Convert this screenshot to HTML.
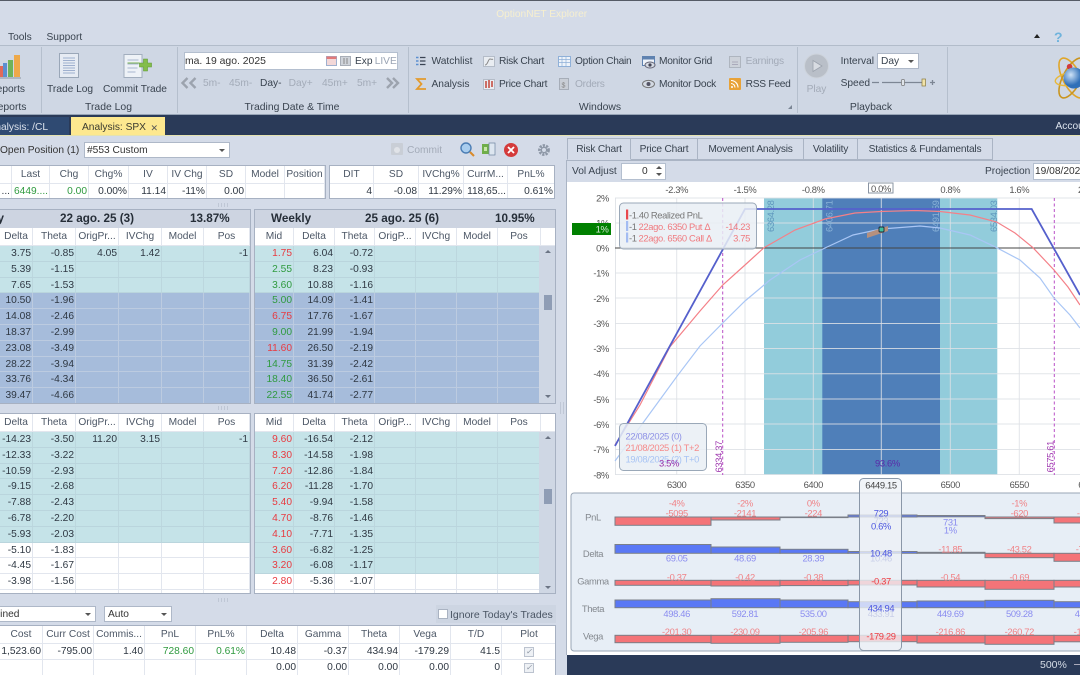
<!DOCTYPE html>
<html><head><meta charset="utf-8"><title>OptionNET Explorer</title>
<style>
html,body{margin:0;padding:0;width:1080px;height:675px;overflow:hidden;background:#d4dbe8}
#a{position:relative;width:1080px;height:675px;overflow:hidden;background:#d4dbe8;font:10.2px "Liberation Sans",sans-serif;color:#39434f;filter:blur(.3px)}
.b{position:absolute}
.t{position:absolute;white-space:nowrap;line-height:12px}
.c{transform:translateX(-50%)}
.w{letter-spacing:-.25px}
.gp{font-size:10.4px}
.dis{color:#a3abb8}
.combo{position:absolute;background:#fff;border:1px solid #aeb8c8;box-sizing:border-box;line-height:15px;padding-left:3px;white-space:nowrap;overflow:hidden}
.combo:after{content:"";position:absolute;right:4px;top:6px;border:3px solid transparent;border-top:3px solid #555;border-bottom:0}
.grid{position:absolute;background:#fff;border:1px solid #a7b1c2;border-left:0;box-sizing:border-box;overflow:hidden}
.title{height:18px;background:#cdd4e1;font-weight:bold;font-size:11.7px;position:relative;color:#262e38}
.r{display:flex;height:15.8px;line-height:15px;box-sizing:border-box;border-bottom:1px solid #e2e6ee;font-size:10.2px;color:#2e3742}
.r span{display:block;box-sizing:border-box;border-right:1px solid #e2e6ee;text-align:right;padding-right:1px;overflow:hidden;white-space:nowrap;flex:none}
.h{height:18px;line-height:17px;color:#4c5766;background:#fff;border-bottom:1px solid #e2e6ee}
.h span{text-align:center;padding:0}
.T{background:#c5e3e8;border-bottom-color:#bad5dd}.T span{border-right-color:#bcd7de}
.S{background:#a6bcdb;border-bottom-color:#bccbe0}.S span{border-right-color:#bccbe0}
.a{color:#e83a40}.g{color:#2f9a3f}
.gl .r span:nth-child(1){width:33px}.gl .r span:nth-child(2),.gl .r span:nth-child(3),.gl .r span:nth-child(4){width:43px}.gl .r span:nth-child(5){width:42px}.gl .r span:nth-child(6){width:46px}
.gr .r{width:286px}
.gr .r span:nth-child(1){width:39px}.gr .r span:nth-child(2){width:41px}.gr .r span:nth-child(3){width:40px}.gr .r span:nth-child(4),.gr .r span:nth-child(5),.gr .r span:nth-child(6){width:41px}.gr .r span:nth-child(7){width:43px}
.gr .r.h{width:302px}.gr .r.h span:nth-child(8){width:16px;border:0}
.sc{position:absolute;right:0;width:16px;background:#cfd7e4}
.dots{position:absolute;width:13px;height:4px;background-image:radial-gradient(#aab3c2 .7px,transparent .8px);background-size:3px 2px}
.top1 span:nth-child(1){width:12px}.top1 span:nth-child(2){width:38px}.top1 span:nth-child(3){width:39px}.top1 span:nth-child(4){width:40px}.top1 span:nth-child(5){width:39px}.top1 span:nth-child(6){width:39px}.top1 span:nth-child(7){width:39px}.top1 span:nth-child(8){width:39px}.top1 span:nth-child(9){width:40px}
.top2 span:nth-child(1){width:44px}.top2 span:nth-child(2){width:45px}.top2 span:nth-child(3){width:45px}.top2 span:nth-child(4){width:44px}.top2 span:nth-child(5){width:46px}
.bt span{width:51px}.bt span:nth-child(1){width:43px}.bt span:nth-child(11){width:54px;text-align:center;padding:0;border-right:0}
.tab{position:absolute;top:138px;height:22px;box-sizing:border-box;border:1px solid #aab4c4;border-left:0;border-bottom:1px solid #aab4c4;line-height:22px;text-align:center;background:#d4dbe8;font-size:10.2px;letter-spacing:-.2px;white-space:nowrap}
svg text{font-family:"Liberation Sans",sans-serif;font-size:9.4px;letter-spacing:-.35px}
.cb{display:inline-block;width:8px;height:8px;border:1px solid #bcc3cf;background:#eef1f5;color:#8a93a0;font-size:8px;line-height:8px;text-align:center;margin-top:2px}
</style></head><body><div id="a">

<!-- title -->
<div class="b" style="left:0;top:0;width:1080px;height:1px;background:#555b66"></div>
<div class="t c" style="left:541.7px;top:8.5px;color:#f6efcf">OptionNET Explorer</div>
<div class="t" style="left:8px;top:32px">Tools</div>
<div class="t" style="left:46.5px;top:32px">Support</div>
<div class="b" style="left:1033.5px;top:34px;border:3.5px solid transparent;border-bottom:4px solid #222;border-top:0"></div>
<div class="t" style="left:1054px;top:30px;color:#6fb3dc;font-weight:bold;font-size:14px;line-height:14px">?</div>

<!-- ribbon -->
<div class="b" style="left:0;top:45px;width:1080px;height:70px;background:#cfd7e4;border-top:1px solid #b2bcca;border-bottom:1px solid #97a4b6;box-sizing:border-box"></div>
<div class="b" style="left:40.5px;top:47px;width:1px;height:66px;background:#b5bfcd"></div>
<div class="b" style="left:176.5px;top:47px;width:1px;height:66px;background:#b5bfcd"></div>
<div class="b" style="left:408px;top:47px;width:1px;height:66px;background:#b5bfcd"></div>
<div class="b" style="left:796.5px;top:47px;width:1px;height:66px;background:#b5bfcd"></div>
<div class="b" style="left:947px;top:47px;width:1px;height:66px;background:#b5bfcd"></div>

<div class="t" style="right:1055px;top:84px">Reports</div>
<div class="t gp" style="right:1053.5px;top:102px">Reports</div>
<div class="t" style="left:47px;top:84px">Trade Log</div>
<div class="t" style="left:103px;top:84px">Commit Trade</div>
<div class="t c gp" style="left:108.5px;top:102px">Trade Log</div>

<div class="b" style="left:183.5px;top:52px;width:214.5px;height:18px;background:#fff;border:1px solid #b4bfcf;box-sizing:border-box"></div>
<div class="t" style="left:185px;top:56px;font-size:10.4px;color:#333">ma. 19 ago. 2025</div>
<div class="t" style="left:355px;top:56px">Exp</div>
<div class="t dis" style="left:374.7px;top:56px;color:#9aa4b4">LIVE</div>
<div class="t dis" style="left:203px;top:78px">5m-</div>
<div class="t dis" style="left:229px;top:78px">45m-</div>
<div class="t" style="left:260px;top:78px">Day-</div>
<div class="t dis" style="left:288.6px;top:78px">Day+</div>
<div class="t dis" style="left:322px;top:78px">45m+</div>
<div class="t dis" style="left:357px;top:78px">5m+</div>
<div class="t c gp" style="left:292px;top:102px">Trading Date &amp; Time</div>

<div class="t" style="left:431.5px;top:56px">Watchlist</div>
<div class="t" style="left:431.5px;top:78.5px">Analysis</div>
<div class="t w" style="left:499px;top:56px">Risk Chart</div>
<div class="t w" style="left:499px;top:78.5px">Price Chart</div>
<div class="t w" style="left:575px;top:56px">Option Chain</div>
<div class="t dis w" style="left:575px;top:78.5px">Orders</div>
<div class="t w" style="left:659px;top:56px">Monitor Grid</div>
<div class="t w" style="left:659px;top:78.5px">Monitor Dock</div>
<div class="t dis w" style="left:745.6px;top:56px">Earnings</div>
<div class="t w" style="left:745.6px;top:78.5px">RSS Feed</div>
<div class="t c gp" style="left:600px;top:102px">Windows</div>

<div class="t dis c" style="left:816.5px;top:84px">Play</div>
<div class="t" style="left:840.6px;top:56px">Interval</div>
<div class="combo" style="left:877px;top:53px;width:42px;height:16px;line-height:15px">Day</div>
<div class="t" style="left:840.6px;top:78px">Speed</div>
<div class="t c gp" style="left:871px;top:102px">Playback</div>

<!-- tab bar -->
<div class="b" style="left:0;top:115px;width:1080px;height:20px;background:#2a3a58"></div>
<div class="b" style="left:0;top:117px;width:69px;height:18px;background:#2f4a72"></div>
<div class="t" style="right:1032px;top:121.5px;color:#dbe2ec;width:64px;text-align:right;overflow:hidden">Analysis: /CL</div>
<div class="b" style="left:71px;top:117px;width:94px;height:18px;background:#fde88f"></div>
<div class="t" style="left:82px;top:121.5px;color:#3a3a30">Analysis: SPX</div>
<div class="t" style="left:150.5px;top:121.5px;color:#555;font-size:9px">✕</div>
<div class="t" style="left:1055.5px;top:120.5px;color:#dbe2ec">Account</div>
<div class="b" style="left:0;top:135px;width:1080px;height:1px;background:#e4e2b0"></div>

<!-- left toolbar -->
<div class="t" style="left:0;top:145px;color:#333">Open Position (1)</div>
<div class="combo" style="left:84px;top:142px;width:146px;height:16px;padding-left:2px;color:#333">#553 Custom</div>
<div class="t dis" style="left:407px;top:145px">Commit</div>

<!-- top tables -->
<div class="grid" style="left:0;top:165px;width:326px;height:34px">
<div class="r h top1"><span></span><span>Last</span><span>Chg</span><span>Chg%</span><span>IV</span><span>IV Chg</span><span>SD</span><span>Model</span><span>Position</span></div>
<div class="r top1" style="border:0"><span>...</span><span class="g" style="text-align:left;padding-left:2px">6449....</span><span class="g">0.00</span><span>0.00%</span><span>11.14</span><span>-11%</span><span>0.00</span><span></span><span></span></div>
</div>
<div class="grid" style="left:329px;top:165px;width:226px;height:34px;border-left:1px solid #a7b1c2">
<div class="r h top2"><span>DIT</span><span>SD</span><span>IVChg%</span><span>CurrM...</span><span style="border:0">PnL%</span></div>
<div class="r top2" style="border:0"><span>4</span><span>-0.08</span><span>11.29%</span><span>118,65...</span><span style="border:0">0.61%</span></div>
</div>
<div class="dots" style="left:217px;top:203px"></div>

<!-- grid TL -->
<div class="grid gl" style="left:0;top:209px;width:251px;height:195px">
<div class="title"><div class="t" style="right:246px;top:3px">Weekly</div><div class="t" style="left:60px;top:3px">22 ago. 25 (3)</div><div class="t" style="left:190px;top:3px">13.87%</div></div>
<div class="r h"><span>Delta</span><span>Theta</span><span>OrigPr...</span><span>IVChg</span><span>Model</span><span>Pos</span></div>
<div class="r T"><span>3.75</span><span>-0.85</span><span>4.05</span><span>1.42</span><span></span><span>-1</span></div>
<div class="r T"><span>5.39</span><span>-1.15</span><span></span><span></span><span></span><span></span></div>
<div class="r T"><span>7.65</span><span>-1.53</span><span></span><span></span><span></span><span></span></div>
<div class="r S"><span>10.50</span><span>-1.96</span><span></span><span></span><span></span><span></span></div>
<div class="r S"><span>14.08</span><span>-2.46</span><span></span><span></span><span></span><span></span></div>
<div class="r S"><span>18.37</span><span>-2.99</span><span></span><span></span><span></span><span></span></div>
<div class="r S"><span>23.08</span><span>-3.49</span><span></span><span></span><span></span><span></span></div>
<div class="r S"><span>28.22</span><span>-3.94</span><span></span><span></span><span></span><span></span></div>
<div class="r S"><span>33.76</span><span>-4.34</span><span></span><span></span><span></span><span></span></div>
<div class="r S"><span>39.47</span><span>-4.66</span><span></span><span></span><span></span><span></span></div>
</div>

<!-- grid TR -->
<div class="grid gr" style="left:254px;top:209px;width:302px;height:195px;border-left:1px solid #a7b1c2">
<div class="title"><div class="t" style="left:16px;top:3px">Weekly</div><div class="t" style="left:110px;top:3px">25 ago. 25 (6)</div><div class="t" style="left:240px;top:3px">10.95%</div></div>
<div class="r h"><span>Mid</span><span>Delta</span><span>Theta</span><span>OrigP...</span><span>IVChg</span><span>Model</span><span>Pos</span><span></span></div>
<div class="r T"><span class="a">1.75</span><span>6.04</span><span>-0.72</span><span></span><span></span><span></span><span></span></div>
<div class="r T"><span class="g">2.55</span><span>8.23</span><span>-0.93</span><span></span><span></span><span></span><span></span></div>
<div class="r T"><span class="g">3.60</span><span>10.88</span><span>-1.16</span><span></span><span></span><span></span><span></span></div>
<div class="r S"><span class="g">5.00</span><span>14.09</span><span>-1.41</span><span></span><span></span><span></span><span></span></div>
<div class="r S"><span class="a">6.75</span><span>17.76</span><span>-1.67</span><span></span><span></span><span></span><span></span></div>
<div class="r S"><span class="g">9.00</span><span>21.99</span><span>-1.94</span><span></span><span></span><span></span><span></span></div>
<div class="r S"><span class="a">11.60</span><span>26.50</span><span>-2.19</span><span></span><span></span><span></span><span></span></div>
<div class="r S"><span class="g">14.75</span><span>31.39</span><span>-2.42</span><span></span><span></span><span></span><span></span></div>
<div class="r S"><span class="g">18.40</span><span>36.50</span><span>-2.61</span><span></span><span></span><span></span><span></span></div>
<div class="r S"><span class="g">22.55</span><span>41.74</span><span>-2.77</span><span></span><span></span><span></span><span></span></div>
<div class="sc" style="top:36px;bottom:0"></div>
<div class="b" style="left:289px;top:85px;width:8px;height:15px;background:#8f9db5"></div>
<div class="b" style="left:290px;top:40px;border:3px solid transparent;border-bottom:3px solid #6b7484;border-top:0"></div>
<div class="b" style="left:290px;top:185px;border:3px solid transparent;border-top:3px solid #6b7484;border-bottom:0"></div>
</div>
<div class="dots" style="left:217px;top:406px"></div>

<!-- grid BL -->
<div class="grid gl" style="left:0;top:413px;width:251px;height:181px">
<div class="r h"><span>Delta</span><span>Theta</span><span>OrigPr...</span><span>IVChg</span><span>Model</span><span>Pos</span></div>
<div class="r T"><span>-14.23</span><span>-3.50</span><span>11.20</span><span>3.15</span><span></span><span>-1</span></div>
<div class="r T"><span>-12.33</span><span>-3.22</span><span></span><span></span><span></span><span></span></div>
<div class="r T"><span>-10.59</span><span>-2.93</span><span></span><span></span><span></span><span></span></div>
<div class="r T"><span>-9.15</span><span>-2.68</span><span></span><span></span><span></span><span></span></div>
<div class="r T"><span>-7.88</span><span>-2.43</span><span></span><span></span><span></span><span></span></div>
<div class="r T"><span>-6.78</span><span>-2.20</span><span></span><span></span><span></span><span></span></div>
<div class="r T"><span>-5.93</span><span>-2.03</span><span></span><span></span><span></span><span></span></div>
<div class="r"><span>-5.10</span><span>-1.83</span><span></span><span></span><span></span><span></span></div>
<div class="r"><span>-4.45</span><span>-1.67</span><span></span><span></span><span></span><span></span></div>
<div class="r"><span>-3.98</span><span>-1.56</span><span></span><span></span><span></span><span></span></div>
<div class="r"><span></span><span></span><span></span><span></span><span></span><span></span></div>
</div>

<!-- grid BR -->
<div class="grid gr" style="left:254px;top:413px;width:302px;height:181px;border-left:1px solid #a7b1c2">
<div class="r h"><span>Mid</span><span>Delta</span><span>Theta</span><span>OrigP...</span><span>IVChg</span><span>Model</span><span>Pos</span><span></span></div>
<div class="r T"><span class="a">9.60</span><span>-16.54</span><span>-2.12</span><span></span><span></span><span></span><span></span></div>
<div class="r T"><span class="a">8.30</span><span>-14.58</span><span>-1.98</span><span></span><span></span><span></span><span></span></div>
<div class="r T"><span class="a">7.20</span><span>-12.86</span><span>-1.84</span><span></span><span></span><span></span><span></span></div>
<div class="r T"><span class="a">6.20</span><span>-11.28</span><span>-1.70</span><span></span><span></span><span></span><span></span></div>
<div class="r T"><span class="a">5.40</span><span>-9.94</span><span>-1.58</span><span></span><span></span><span></span><span></span></div>
<div class="r T"><span class="a">4.70</span><span>-8.76</span><span>-1.46</span><span></span><span></span><span></span><span></span></div>
<div class="r T"><span class="a">4.10</span><span>-7.71</span><span>-1.35</span><span></span><span></span><span></span><span></span></div>
<div class="r T"><span class="a">3.60</span><span>-6.82</span><span>-1.25</span><span></span><span></span><span></span><span></span></div>
<div class="r T"><span class="a">3.20</span><span>-6.08</span><span>-1.17</span><span></span><span></span><span></span><span></span></div>
<div class="r"><span class="a">2.80</span><span>-5.36</span><span>-1.07</span><span></span><span></span><span></span><span></span></div>
<div class="r"><span></span><span></span><span></span><span></span><span></span><span></span><span></span></div>
<div class="sc" style="top:18px;bottom:0"></div>
<div class="b" style="left:289px;top:75px;width:8px;height:15px;background:#8f9db5"></div>
<div class="b" style="left:290px;top:22px;border:3px solid transparent;border-bottom:3px solid #6b7484;border-top:0"></div>
<div class="b" style="left:290px;top:172px;border:3px solid transparent;border-top:3px solid #6b7484;border-bottom:0"></div>
</div>
<div class="dots" style="left:217px;top:598px"></div>
<div class="dots" style="left:559px;top:402px;width:5px;height:12px"></div>

<!-- lower toolbar -->
<div class="combo" style="left:-30px;top:606px;width:126px;height:16px;padding-left:2px;color:#333">Combined</div>
<div class="combo" style="left:104px;top:606px;width:68px;height:16px;color:#333">Auto</div>
<div class="b" style="left:436px;top:605px;width:120px;height:18px;background:#cdd5e2"></div>
<div class="b" style="left:438px;top:609px;width:8px;height:8px;background:#fff;border:1px solid #aab3c2"></div>
<div class="t" style="left:450px;top:608.5px;color:#4a5564;font-size:10.5px">Ignore Today's Trades</div>

<!-- bottom table -->
<div class="grid" style="left:0;top:625px;width:556px;height:51px">
<div class="r h bt"><span>Cost</span><span>Curr Cost</span><span>Commis...</span><span>PnL</span><span>PnL%</span><span>Delta</span><span>Gamma</span><span>Theta</span><span>Vega</span><span>T/D</span><span>Plot</span></div>
<div class="r bt"><span>1,523.60</span><span>-795.00</span><span>1.40</span><span class="g">728.60</span><span class="g">0.61%</span><span>10.48</span><span>-0.37</span><span>434.94</span><span>-179.29</span><span>41.5</span><span><i class="cb">✓</i></span></div>
<div class="r bt"><span></span><span></span><span></span><span></span><span></span><span>0.00</span><span>0.00</span><span>0.00</span><span>0.00</span><span>0</span><span><i class="cb">✓</i></span></div>
</div>

<!-- right panel -->
<div class="b" style="left:566px;top:160px;width:514px;height:22px;background:#d4dbe8;border-top:1px solid #aab4c4;box-sizing:border-box"></div>
<div class="tab" style="left:567px;width:64px;border-left:1px solid #aab4c4;border-bottom-color:#d4dbe8;z-index:2">Risk Chart</div>
<div class="tab" style="left:631px;width:67px">Price Chart</div>
<div class="tab" style="left:698px;width:106px">Movement Analysis</div>
<div class="tab" style="left:804px;width:54px">Volatility</div>
<div class="tab" style="left:858px;width:135px">Statistics &amp; Fundamentals</div>
<div class="t" style="left:572px;top:166px">Vol Adjust</div>
<div class="b" style="left:621px;top:163px;width:45px;height:17px;background:#fff;border:1px solid #b4bfcf;box-sizing:border-box"></div>
<div class="t" style="left:642px;top:166px;color:#333">0</div>
<div class="b" style="left:656px;top:166px;border:3px solid transparent;border-bottom:3px solid #555;border-top:0"></div>
<div class="b" style="left:656px;top:173px;border:3px solid transparent;border-top:3px solid #555;border-bottom:0"></div>
<div class="t" style="left:985px;top:166px">Projection</div>
<div class="b" style="left:1033px;top:163px;width:60px;height:17px;background:#fff;border:1px solid #b4bfcf;box-sizing:border-box"></div>
<div class="t" style="left:1035px;top:166px;color:#333">19/08/2025</div>

<div class="b" style="left:567px;top:182px;width:513px;height:473px;background:#fff"></div>
<div class="b" style="left:566px;top:160px;width:1px;height:495px;background:#aab4c4"></div>
<div class="b" style="left:567px;top:655px;width:513px;height:20px;background:#2a3a58"></div>
<div class="t" style="left:1040px;top:659px;color:#d5dce6;font-size:10.5px">500%</div>
<div class="b" style="left:1074px;top:664px;width:6px;height:1px;background:#aab"></div>

<svg class="b" style="left:0;top:0" width="1080" height="675" viewBox="0 0 1080 675">
<!-- ribbon icons -->
<g>
<rect x="-2" y="66" width="5" height="11" fill="#e06a5a"/><rect x="3" y="63" width="4" height="14" fill="#5b8fd0"/><rect x="8" y="60" width="5" height="17" fill="#6fb35a"/><rect x="14" y="55" width="6" height="22" fill="#eea94a"/>
<path d="M0 78h21" stroke="#8a94a2"/>
<g transform="translate(2,0)"><rect x="57.5" y="53.5" width="19" height="24" fill="#e6ebf3" stroke="#9aa7b8"/><path d="M61 58h12M61 60.5h12M61 63h12M61 65.5h12M61 68h12M61 70.5h12M61 73h12" stroke="#9fb0cf"/></g>
<g transform="translate(3.5,0)"><rect x="120.5" y="54.5" width="18" height="23" fill="#eef2f7" stroke="#a2aebe"/><path d="M124 60h11M124 64h11M124 68h10M124 72h8" stroke="#a8b7cf"/><path d="M124 63h12" stroke="#78b050"/>
<path d="M136 63h4v-4h4v4h4v4h-4v4h-4v-4h-4z" fill="#84bd4a" stroke="#5e9a34" stroke-width=".6"/></g>
<!-- date -->
<g transform="translate(10,0)"><rect x="316.5" y="56.5" width="10" height="9" fill="#f3d8d8" stroke="#9fb0cf"/><rect x="316.5" y="56.5" width="10" height="2.5" fill="#e27a7a"/></g>
<g transform="translate(11,0)"><rect x="329.5" y="56.5" width="10" height="9" fill="#cfd3da" stroke="#a8aeb8"/><path d="M333 58v6M336 58v6" stroke="#777" stroke-width=".8"/></g>
<path d="M187.5 78l-5 5 5 5M195.5 78l-5 5 5 5" fill="none" stroke="#9ca3ae" stroke-width="2.4"/>
<path d="M387 78l5 5-5 5M393 78l5 5-5 5" fill="none" stroke="#9ca3ae" stroke-width="2.4"/>
<!-- windows icons -->
<g transform="translate(13,0)"><path d="M407 57.5h5.5M407 61h5.5M407 64.5h5.5" stroke="#3a4454" stroke-width="1.2"/><path d="M403 57.5h2.5M403 61h2.5M403 64.5h2.5" stroke="#5b8fd0" stroke-width="1.6"/>
<path d="M413 79h-9l4.5 5-4.5 5h9" fill="none" stroke="#e39b2e" stroke-width="1.8"/></g>
<g transform="translate(15,0)"><rect x="468.5" y="56.5" width="11" height="10" fill="#e9edf2" stroke="#b4bcc8"/><path d="M470 65c3 0 3-6 5-6s2 1 3 0" fill="none" stroke="#888" stroke-width="1"/>
<rect x="468.5" y="79.5" width="11" height="10" fill="#e9edf2" stroke="#b4bcc8"/><path d="M471 81v7M474 80v8M477 81v6" stroke="#c0392b" stroke-width="1.4"/></g>
<rect x="558.5" y="56.5" width="12" height="10" fill="#eef3fa" stroke="#8fb0d8"/><path d="M558 59.5h12M558 62.5h12M562 57v9M566 57v9" stroke="#8fb0d8" stroke-width=".7"/>
<rect x="559.5" y="78.5" width="9" height="11" fill="#c9ced6" stroke="#a6adb8"/><text x="561.5" y="87.5" style="font-size:7px" fill="#888">$</text>
<g transform="translate(3,0)"><rect x="639.5" y="56.5" width="12" height="9" fill="#eef3fa" stroke="#5f82b0"/><rect x="639.5" y="56.5" width="12" height="3" fill="#5f82b0"/>
<ellipse cx="647" cy="65" rx="5" ry="3" fill="#d4dae3" stroke="#667"/><circle cx="647" cy="65" r="1.6" fill="#445"/>
<ellipse cx="645.5" cy="84" rx="6" ry="3.6" fill="#d4dae3" stroke="#777"/><circle cx="645.5" cy="84" r="2" fill="#556"/></g>
<g transform="translate(6,0)"><rect x="723.5" y="56.5" width="11" height="11" fill="#cdd2da" stroke="#aeb5bf"/><path d="M726 62h6M726 64.5h6" stroke="#aab" stroke-width="1"/>
<rect x="723" y="78" width="12" height="12" rx="1" fill="#e8a238"/><path d="M725 80.5a7 7 0 0 1 7 7M725 83.5a4 4 0 0 1 4 4" fill="none" stroke="#fff" stroke-width="1.1"/><circle cx="726" cy="87" r="1" fill="#fff"/></g>
<path d="M792 105v4h-4z" fill="#7b8594"/>
<!-- play -->
<circle cx="816.5" cy="66" r="12" fill="#b9bfc8" stroke="#cdd3db"/><path d="M813 60.5l9 5.5-9 5.5z" fill="#d8dce2" stroke="#9ba2ad" stroke-width=".8"/>
<!-- slider -->
<path d="M872 82.5h7M882 82.5h42" stroke="#7d8694" stroke-width="1.3"/>
<rect x="901.5" y="79.5" width="3" height="6" rx="1" fill="#dfe4ea" stroke="#777" stroke-width=".7"/>
<rect x="922" y="79" width="3.5" height="7" fill="#f1e3a8" stroke="#8a7a40" stroke-width=".7"/>
<path d="M930 82.5h5M932.5 80v5" stroke="#7d8694" stroke-width="1.3"/>
<!-- atom -->
<ellipse cx="1072" cy="78" rx="9" ry="22" transform="rotate(-28 1072 78)" fill="none" stroke="#e0a62a" stroke-width="1.6"/>
<ellipse cx="1072" cy="78" rx="9" ry="22" transform="rotate(28 1072 78)" fill="none" stroke="#c99520" stroke-width="1.6"/>
<ellipse cx="1075" cy="78" rx="20" ry="7" transform="rotate(-10 1075 78)" fill="none" stroke="#e8b83a" stroke-width="1.4"/>
<circle cx="1069.6" cy="66.7" r="2.8" fill="#d23b3b"/>
<defs><radialGradient id="s" cx=".35" cy=".35"><stop offset="0" stop-color="#cfe3f7"/><stop offset="1" stop-color="#2f6fb8"/></radialGradient></defs>
<circle cx="1074" cy="78" r="10.5" fill="url(#s)"/>
<!-- toolbar icons -->
<rect x="391" y="143" width="12" height="12" rx="1" fill="#c9ced6"/><circle cx="397" cy="150" r="3" fill="#e0e3e8"/>
<circle cx="466" cy="148" r="5" fill="#a9cdee" stroke="#4b7db4" stroke-width="1.4"/><path d="M470 152l4 4" stroke="#d98a2b" stroke-width="2"/>
<rect x="482" y="144" width="7" height="10" fill="#6fae4a"/><rect x="489" y="143" width="6" height="12" fill="#dde6f0" stroke="#6d84a0" stroke-width=".7"/><rect x="484" y="147" width="3" height="4" fill="#c8e6a8"/>
<circle cx="511" cy="150" r="7" fill="#d43b3b"/><path d="M508 147l6 6M514 147l-6 6" stroke="#fff" stroke-width="1.8"/>
<circle cx="544" cy="150" r="4.5" fill="none" stroke="#8d97a6" stroke-width="2.8" stroke-dasharray="2.2 1.1"/><circle cx="544" cy="150" r="2.6" fill="none" stroke="#8d97a6" stroke-width="1.2"/>
</g>

<!-- chart bands -->
<rect x="764" y="198" width="233.3" height="277" fill="#92ccdb"/>
<rect x="822.3" y="198" width="117.7" height="277" fill="#4f7fb9"/>
<!-- grid -->
<g stroke="#dde0e5" stroke-opacity=".85" stroke-width="1" fill="none">
<path d="M615 198H1080M615 223H1080M615 273H1080M615 298H1080M615 323.5H1080M615 348.5H1080M615 373.7H1080M615 399H1080M615 424H1080M615 449.5H1080M615 474.5H1080"/>
<path d="M615.5 198V475M676.7 198V475M745 198V475M813.3 198V475M881.3 198V475M950.3 198V475M1019.3 198V475"/>
</g>
<path d="M615 248H1080" stroke="#444" stroke-width="1"/>
<path d="M722.7 198V475M1054.3 198V475" stroke="#b94fc6" stroke-width="1" stroke-dasharray="3 2.5"/>

<!-- rotated labels -->
<g>
<text transform="translate(774,232) rotate(-90)" fill="#5e96bd">6364.28</text>
<text transform="translate(832.5,232) rotate(-90)" fill="#8ab3d8">6406.71</text>
<text transform="translate(939,232) rotate(-90)" fill="#8ab3d8">6491.59</text>
<text transform="translate(997,232) rotate(-90)" fill="#5e96bd">6534.03</text>
<text transform="translate(722,472.5) rotate(-90)" fill="#a03ab0">6334.37</text>
<text transform="translate(1053.5,472.5) rotate(-90)" fill="#a03ab0">6575.61</text>
</g>

<!-- curves -->
<polyline fill="none" stroke="#a9c6f5" stroke-width="1.2" points="615,461 640,427 676.7,376.7 700,346 722.7,323 745,301 770,280 800,260 825,248 853,235 881,229 920,226 940,228 970,235 996.7,247.7 1020,260 1040,278 1054,298 1070,315 1080,328"/>
<polyline fill="none" stroke="#f48088" stroke-width="1.2" points="615,445 640,405 670,346.7 700,311 722.7,285 745,265 764,247.7 795,230 825,219 855,213 881,211.5 915,210.5 940,211.5 970,215 996.7,222 1015,233 1033,247.7 1054,270 1068,287 1080,305"/>
<polyline fill="none" stroke="#5560cc" stroke-width="1.8" points="615,446 745,209 1031.7,209 1080,295"/>
<path d="M867 233l21-7v5l-21 7z" fill="#b5907e"/>
<rect x="879" y="227" width="5" height="5" rx="1" fill="#3fbfa0" stroke="#223" stroke-width=".9"/>

<!-- y labels -->
<g fill="#555" text-anchor="end">
<text x="609" y="201.5">2%</text><text x="609" y="226.5">1%</text><text x="609" y="251.5">0%</text><text x="609" y="276.5">-1%</text><text x="609" y="302">-2%</text><text x="609" y="327">-3%</text><text x="609" y="352">-3%</text><text x="609" y="377">-4%</text><text x="609" y="403">-5%</text><text x="609" y="428">-6%</text><text x="609" y="453">-7%</text><text x="609" y="478.5">-8%</text>
</g>
<rect x="572" y="223" width="39" height="12" fill="#008000"/>
<text x="608.5" y="232.5" text-anchor="end" fill="#d8e8d8">1%</text>

<!-- top x labels -->
<g fill="#555" text-anchor="middle">
<text x="676.7" y="193">-2.3%</text><text x="745" y="193">-1.5%</text><text x="813.3" y="193">-0.8%</text><text x="881" y="192">0.0%</text><text x="950.3" y="193">0.8%</text><text x="1019.3" y="193">1.6%</text><text x="1088" y="193">2.3%</text>
<text x="676.7" y="488">6300</text><text x="745" y="488">6350</text><text x="813.3" y="488">6400</text><text x="950.3" y="488">6500</text><text x="1019.3" y="488">6550</text><text x="1088" y="488">6600</text>
</g>
<rect x="868.5" y="183" width="24.5" height="10" fill="none" stroke="#8a94a3"/>

<!-- tooltip 1 -->
<rect x="619.5" y="203" width="137" height="46" rx="4" fill="#e9eef5" fill-opacity=".85" stroke="#9aa8b8"/>
<rect x="626" y="209.5" width="2.2" height="10" fill="#e8484e"/><rect x="626" y="221" width="2.2" height="10" fill="#a3bcf2"/><rect x="626" y="232.5" width="2.2" height="10" fill="#a3bcf2"/>
<text x="629" y="218.5" fill="#777">-1.40 Realized PnL</text>
<text x="629" y="230" fill="#777">-1</text><text x="638.5" y="230" fill="#f07a7f">22ago. 6350 Put Δ</text><text x="750" y="230" fill="#f07a7f" text-anchor="end">-14.23</text>
<text x="629" y="241.5" fill="#777">-1</text><text x="638.5" y="241.5" fill="#f07a7f">22ago. 6560 Call Δ</text><text x="750" y="241.5" fill="#f07a7f" text-anchor="end">3.75</text>

<!-- tooltip 2 -->
<rect x="619.5" y="423.5" width="87" height="47" rx="4" fill="#e9eef5" fill-opacity=".85" stroke="#9aa8b8"/>
<text x="625.5" y="439.5" fill="#8f93e6">22/08/2025 (0)</text>
<text x="625.5" y="451" fill="#f58a8a">21/08/2025 (1) T+2</text>
<text x="625.5" y="462.5" fill="#a8c4f4">19/08/2025 (2) T+0</text>
<text x="659" y="466.5" fill="#9a2fa8">3.5%</text>
<text x="875" y="466.5" fill="#5a2aa8">93.6%</text>

<!-- bottom panel -->
<rect x="571" y="493" width="520" height="158" rx="3" fill="#e7eef6" stroke="#9aa6b5"/>
<g fill="#84898f" text-anchor="middle"><text x="593" y="520.5">PnL</text><text x="593" y="557">Delta</text><text x="593" y="584.5">Gamma</text><text x="593" y="612">Theta</text><text x="593" y="639.5">Vega</text></g>
<g stroke="#7a7f88" stroke-width="1" fill="#f47478">
<!-- PnL -->
<rect x="615" y="517" width="96" height="8.3"/><rect x="711" y="517" width="69" height="3"/><rect x="780" y="517" width="68" height=".6"/>
<rect x="848" y="515" width="69" height="2" fill="#5a78f5"/><rect x="917" y="515.5" width="68" height="1.3" fill="#5a78f5"/>
<rect x="985" y="517" width="69" height="1.6"/><rect x="1054" y="517" width="30" height="6"/>
<!-- Delta -->
<g fill="#5a78f5"><rect x="615" y="544.5" width="96" height="8.8"/><rect x="711" y="547" width="69" height="6.3"/><rect x="780" y="549.3" width="68" height="4"/><rect x="848" y="551.5" width="69" height="1.8"/><rect x="917" y="552.3" width="68" height="1"/></g>
<rect x="985" y="553.3" width="69" height="4.4"/><rect x="1054" y="553.3" width="30" height="8"/>
<!-- Gamma -->
<rect x="615" y="580.3" width="96" height="5"/><rect x="711" y="580.3" width="69" height="5.7"/><rect x="780" y="580.3" width="68" height="5.3"/><rect x="848" y="580.3" width="69" height="4.7"/><rect x="917" y="580.3" width="68" height="6.7"/><rect x="985" y="580.3" width="69" height="9"/><rect x="1054" y="580.3" width="30" height="6.7"/>
<!-- Theta -->
<g fill="#5a78f5"><rect x="615" y="600" width="96" height="7.7"/><rect x="711" y="598.7" width="69" height="9"/><rect x="780" y="600" width="68" height="7.7"/><rect x="848" y="601.7" width="69" height="6"/><rect x="917" y="601" width="68" height="6.7"/><rect x="985" y="600.3" width="69" height="7.4"/><rect x="1054" y="601.7" width="30" height="6"/></g>
<!-- Vega -->
<rect x="615" y="635.3" width="96" height="7.4"/><rect x="711" y="635.3" width="69" height="8"/><rect x="780" y="635.3" width="68" height="7"/><rect x="848" y="635.3" width="69" height="6.4"/><rect x="917" y="635.3" width="68" height="7.7"/><rect x="985" y="635.3" width="69" height="9"/><rect x="1054" y="635.3" width="30" height="6.5"/>
</g>
<g text-anchor="middle" fill="#f08286">
<text x="676.7" y="506.5">-4%</text><text x="676.7" y="516.5">-5095</text><text x="745" y="506.5">-2%</text><text x="745" y="516.5">-2141</text><text x="813.3" y="506.5">0%</text><text x="813.3" y="516.5">-224</text><text x="1019.3" y="506.5">-1%</text><text x="1019.3" y="516.5">-620</text><text x="1088" y="516.5">-1623</text>
<text x="950.3" y="552.5">-11.85</text><text x="1019.3" y="552.5">-43.52</text><text x="1088" y="552.5">-78.90</text>
<text x="676.7" y="580.5">-0.37</text><text x="745" y="580.5">-0.42</text><text x="813.3" y="580.5">-0.38</text><text x="950.3" y="580.5">-0.54</text><text x="1019.3" y="580.5">-0.69</text>
<text x="676.7" y="635">-201.30</text><text x="745" y="635">-230.09</text><text x="813.3" y="635">-205.96</text><text x="950.3" y="635">-216.86</text><text x="1019.3" y="635">-260.72</text><text x="1088" y="635">-150.11</text>
</g>
<g text-anchor="middle" fill="#8a8cf0">
<text x="676.7" y="561.5">69.05</text><text x="745" y="561.5">48.69</text><text x="813.3" y="561.5">28.39</text>
<text x="676.7" y="617">498.46</text><text x="745" y="617">592.81</text><text x="813.3" y="617">535.00</text><text x="950.3" y="617">449.69</text><text x="1019.3" y="617">509.28</text><text x="1088" y="617">449.12</text>
<text x="950.3" y="525.5">731</text><text x="950.3" y="533.5">1%</text>
</g>
<!-- spot box -->
<rect x="859.5" y="478.5" width="42" height="172" rx="4" fill="#edf1f6" fill-opacity=".78" stroke="#8a97a8"/>
<text x="881" y="488.5" text-anchor="middle" fill="#444">6449.15</text>
<g text-anchor="middle">
<text x="881" y="524" fill="#c9cfe8">723</text><text x="881" y="561.5" fill="#c9cfe8">10.46</text><text x="881" y="617" fill="#c9cfe8">433.91</text>
<text x="881" y="516.5" fill="#4a55e0">729</text><text x="881" y="529.5" fill="#4a55e0">0.6%</text>
<text x="881" y="556.5" fill="#4a55e0">10.48</text>
<text x="881" y="584.5" fill="#ec3a40">-0.37</text>
<text x="881" y="611.5" fill="#4a55e0">434.94</text>
<text x="881" y="639.5" fill="#ec3a40">-179.29</text>
</g>
</svg>
</div></body></html>
